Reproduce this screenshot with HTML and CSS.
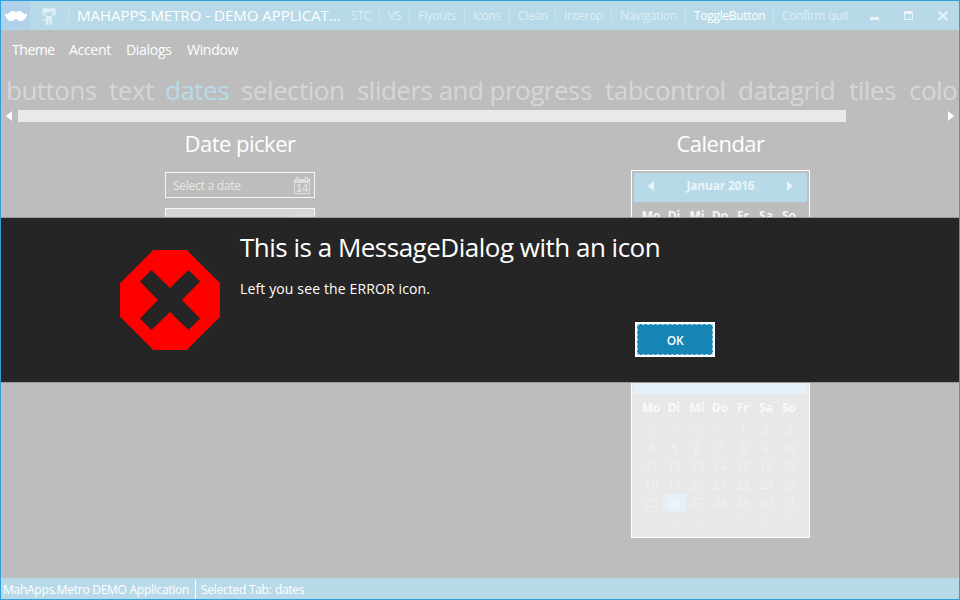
FILE: index.html
```html
<!DOCTYPE html>
<html lang="en">
<head>
<meta charset="utf-8">
<title>MahApps.Metro - Demo Application</title>
<link rel="stylesheet" href="styles.css">
</head>
<body>
<div class="window">
  <header class="titlebar">
    <div class="logo"><svg width="24" height="14" viewBox="0 0 24 14"><path fill="#fff" d="M12 4.200C11 1.800 8 1 5.800 3.200C4.200 5.200 2.500 5.500 0.800 4.200C1.300 9 4 12 7.500 12C9.800 12 11.200 10.800 12 9.300C12.800 10.800 14.200 12 16.500 12C20 12 22.700 9 23.200 4.200C21.500 5.500 19.800 5.200 18.200 3.200C16 1 13 1.800 12 4.200Z"/></svg></div>
    <svg class="cat" width="18" height="18" viewBox="0 0 18 18"><path fill="#e0eff5" fill-rule="evenodd" d="M3 0L6 1.500H12L15 0L15.500 4C16.500 7 15 9.500 11.500 10L12 12V16L13.500 17.500H4.500L6 16V14C3.500 14.500 3 12 1.500 11.500C3.500 11 4 13 6 12.500L6.500 10C3 9.500 1.500 7 2.500 4ZM4.500 5.500C3.500 8.500 5.500 9 9 9S14.500 8.500 13.500 5.500C12 4.700 6 4.700 4.500 5.500ZM5.700 6H7.200V8H5.700ZM10.800 6H12.300V8H10.800ZM8.500 13H9.500V17H8.500Z"/></svg>
    <h1 class="title">MAHAPPS.METRO - DEMO APPLICAT...</h1>
    <nav class="commands">
      <span class="c1">STC</span><span class="c2">VS</span><span class="c3">Flyouts</span><span class="c4">Icons</span><span class="c5">Clean</span><span class="c6">Interop</span><span class="c7">Navigation</span><span class="c8 on">ToggleButton</span><span class="c9">Confirm quit</span>
    </nav>
    <svg class="sysbuttons" width="86" height="12" viewBox="0 0 86 12"><path fill="#e9f4f8" d="M4 7h9v3H4ZM38 1h9v9h-9ZM39 4v5h7V4Z" fill-rule="evenodd"/><path d="M72.500 1.500L81.500 10M81.500 1.500L72.500 10" stroke="#e9f4f8" stroke-width="2"/></svg>
  </header>
  <nav class="menu"><span class="m1">Theme</span><span class="m2">Accent</span><span class="m3">Dialogs</span><span class="m4">Window</span></nav>
  <nav class="tabs"><span class="t1">buttons</span><span class="t2">text</span><span class="t3 active">dates</span><span class="t4">selection</span><span class="t5">sliders and progress</span><span class="t6">tabcontrol</span><span class="t7">datagrid</span><span class="t8">tiles</span><span class="t9">colo</span></nav>
  <div class="scrollbar">
    <svg width="6" height="10"><path d="M6 0V10L0 5Z" fill="#fff"/></svg>
    <div class="thumb"></div>
    <svg width="6" height="10"><path d="M0 0V10L6 5Z" fill="#fff"/></svg>
  </div>
  <main class="content">
    <section class="pickers">
      <h2 class="h-date"><span>Date picker</span></h2>
      <div class="picker"><span class="placeholder">Select a date</span><svg width="16" height="17" viewBox="0 0 16 17"><use href="#cal"/></svg></div>
      <div class="picker filled"><span class="placeholder"></span><svg width="16" height="17" viewBox="0 0 16 17"><use href="#cal"/></svg></div>
    </section>
    <section class="calendars">
      <h2 class="h-cal"><span>Calendar</span></h2>
      <div class="calendar">
        <div class="cal-head"><svg width="6" height="10"><path d="M6 0V10L0 5Z" fill="#e9f4f8"/></svg><b>Januar 2016</b><svg width="6" height="10"><path d="M0 0V10L6 5Z" fill="#e9f4f8"/></svg></div>
        <div class="grid week"><b>Mo</b><b>Di</b><b>Mi</b><b>Do</b><b>Fr</b><b>Sa</b><b>So</b></div>
      </div>
      <div class="calendar disabled">
        <div class="cal-head"></div>
        <div class="grid week"><b>Mo</b><b>Di</b><b>Mi</b><b>Do</b><b>Fr</b><b>Sa</b><b>So</b></div>
        <div class="grid days">
          <i>28</i><i>29</i><i>30</i><i>31</i><span>1</span><span>2</span><span>3</span>
          <span>4</span><span>5</span><span>6</span><span>7</span><span>8</span><span>9</span><span>10</span>
          <span>11</span><span>12</span><span>13</span><span>14</span><span>15</span><span>16</span><span>17</span>
          <span>18</span><span>19</span><span>20</span><span>21</span><span>22</span><span>23</span><span>24</span>
          <span>25</span><span class="today">26</span><span>27</span><span>28</span><span>29</span><span>30</span><span>31</span>
          <i>1</i><i>2</i><i>3</i><i>4</i><i>5</i><i>6</i><i>7</i>
        </div>
      </div>
    </section>
  </main>
  <footer class="status"><span class="s1">MahApps.Metro DEMO Application</span><span class="s2">Selected Tab:</span><span class="s3">dates</span></footer>
  <div class="dialog" role="dialog">
    <svg class="error" width="100" height="100" viewBox="0 0 100 100"><path fill="#f00" fill-rule="evenodd" d="M33.300 0H66.700L100 33.300V66.700L66.700 100H33.300L0 66.700V33.300ZM20 31.500L38 50L20 68.500L31.500 80L50 62L68.500 80L80 68.500L62 50L80 31.500L68.500 20L50 38L31.500 20Z"/></svg>
    <div class="message">
      <h2 class="d-title"><span>This is a MessageDialog with an icon</span></h2>
      <p><span>Left you see the ERROR icon.</span></p>
      <button class="ok">OK</button>
    </div>
  </div>
</div>
<svg class="defs" width="0" height="0"><defs><g id="cal"><path fill="#dedede" fill-rule="evenodd" d="M0 2H2V0H5V2H11V0H14V2H16V17H0ZM1 6V16H15V6ZM3 1V4H4V1ZM12 1V4H13V1Z"/><text x="8" y="15" text-anchor="middle" class="cal-num">14</text></g></defs></svg>
</body>
</html>
```
FILE: styles.css
```css
* { box-sizing: border-box; }
body { margin: 0; font-family: "Open Sans", "Noto Sans", sans-serif; font-size: 12px; color: #fff; overflow: hidden; }
h1, h2, p { margin: 0; font-weight: 400; }
span, b, h1 { white-space: nowrap; }
.defs { position: absolute; }
.window { position: relative; width: 960px; height: 600px; border: 1px solid #2ea1dc; background: #bdbdbd; display: flex; flex-direction: column; overflow: hidden; }
.titlebar { flex: none; height: 29px; background: #b8dae8; display: flex; align-items: center; }
.logo { width: 29px; height: 29px; background: #b0d1ea; display: flex; align-items: center; justify-content: center; }
.cat { margin-left: 10px; }
.title { margin-left: 10px; padding-left: 8px; border-left: 1px solid #cae3ed; width: 275px; font-size: 15px; line-height: 15px; letter-spacing: -0.02px; }
.commands { flex: none; display: flex; width: 523px; color: #dcedf4; line-height: 15px; letter-spacing: -0.3px; }
.commands span { border-right: 1px solid #cae3ed; padding-left: 8px; }
.commands .on { color: #fff; }
.commands .c9 { border: 0; }
.c1 { width: 37px; } .c2 { width: 30px; } .c3 { width: 55px; } .c4 { width: 45px; } .c5 { width: 46px; } .c6 { width: 56px; } .c7 { width: 74px; } .c8 { width: 88px; } .c9 { width: 92px; }
.sysbuttons { flex: none; }
.menu { flex: none; height: 41px; display: flex; align-items: center; font-size: 14px; padding: 0 0 2px 11px; letter-spacing: -0.45px; }
.m1 { width: 57px; } .m2 { width: 57px; } .m3 { width: 61px; }
.m2, .m3, .m4 { letter-spacing: -0.3px; }
.tabs { flex: none; height: 39px; display: flex; font-size: 26px; line-height: 39px; color: #d6d6d6; padding-left: 5px; letter-spacing: -0.52px; }
.tabs span { flex: none; }
.tabs .active { color: #b8dae8; }
.t1 { width: 103px; } .t2 { width: 56px; } .t3 { width: 76px; } .t4 { width: 116px; } .t5 { width: 248px; } .t6 { width: 133px; } .t7 { width: 111px; } .t8 { width: 60px; }
.scrollbar { flex: none; height: 12px; display: flex; align-items: center; padding-left: 5px; }
.thumb { width: 828px; height: 12px; background: #e9e9e9; margin: 0 102px 0 6px; }
.content { flex: 1; display: flex; min-height: 0; }
.content h2 { font-size: 22px; line-height: 30px; height: 48px; padding-top: 6px; text-align: center; letter-spacing: -0.5px; }
.pickers { width: 150px; margin-left: 164px; }
.picker { height: 26px; margin: 2px 0 10px; border: 1px solid #f6f6f6; display: flex; justify-content: space-between; align-items: center; padding: 0 4px 0 7px; color: #e6e6e6; letter-spacing: -0.25px; }
.picker.filled { background: #d6d6d6; }
.cal-num { font: 700 11px "Liberation Sans", sans-serif; fill: #dedede; letter-spacing: 0; }
.calendars { width: 179px; margin-left: 316px; }
.calendar { height: 176px; margin-bottom: 16px; border: 1px solid #fff; padding: 2px; }
.cal-head { height: 29px; background: #b8dae8; display: flex; align-items: center; justify-content: space-between; padding: 0 14px 4px; color: #e9f4f8; letter-spacing: -0.2px; }
.grid { display: grid; grid-template-columns: repeat(7, 23px); justify-content: center; text-align: center; margin-left: -1px; }
.week { height: 28px; line-height: 27px; color: #f6f6f6; }
.disabled .week { color: #fafafa; }
.days { line-height: 18px; color: #f1f1f1; }
.days i { font-style: normal; color: #ececec; }
.disabled { background: #e8e8e8; }
.disabled .cal-head { background: #e5f1f8; }
.days .today { background: #e5f1f8; color: #f4f9fc; }
.days span:nth-child(n+29):nth-child(-n+35) { height: 18px; }
.status { flex: none; height: 21px; background: #b8dae8; display: flex; align-items: center; padding: 1px 0 0 2px; line-height: 19px; letter-spacing: -0.27px; }
.s1 { width: 193px; border-right: 1px solid #fff; }
.s2 { width: 79px; padding-left: 5px; }
.s3 { letter-spacing: -0.4px; }
.dialog { position: absolute; left: 0; top: 216px; width: 958px; height: 166px; background: #252525; border: solid #9b9b9b; border-width: 1px 0; display: flex; padding: 0 0 0 119px; }
.error { margin-top: 32px; flex: none; }
.message { width: 475px; margin-left: 20px; }
.d-title { font-size: 26px; line-height: 34px; margin-top: 12px; letter-spacing: -0.5px; }
.message p { font-size: 14px; line-height: 20px; margin-top: 15px; letter-spacing: 0.13px; }
.ok { display: block; width: 80px; height: 35px; margin: 23px 0 0 auto; padding: 2px 0 0; border: 2px solid #fff; background: #1585b5; outline: 1px dashed #a5d2e5; outline-offset: -3px; color: #fff; font: 600 12px "Open Sans", sans-serif; letter-spacing: -0.3px; }
```
